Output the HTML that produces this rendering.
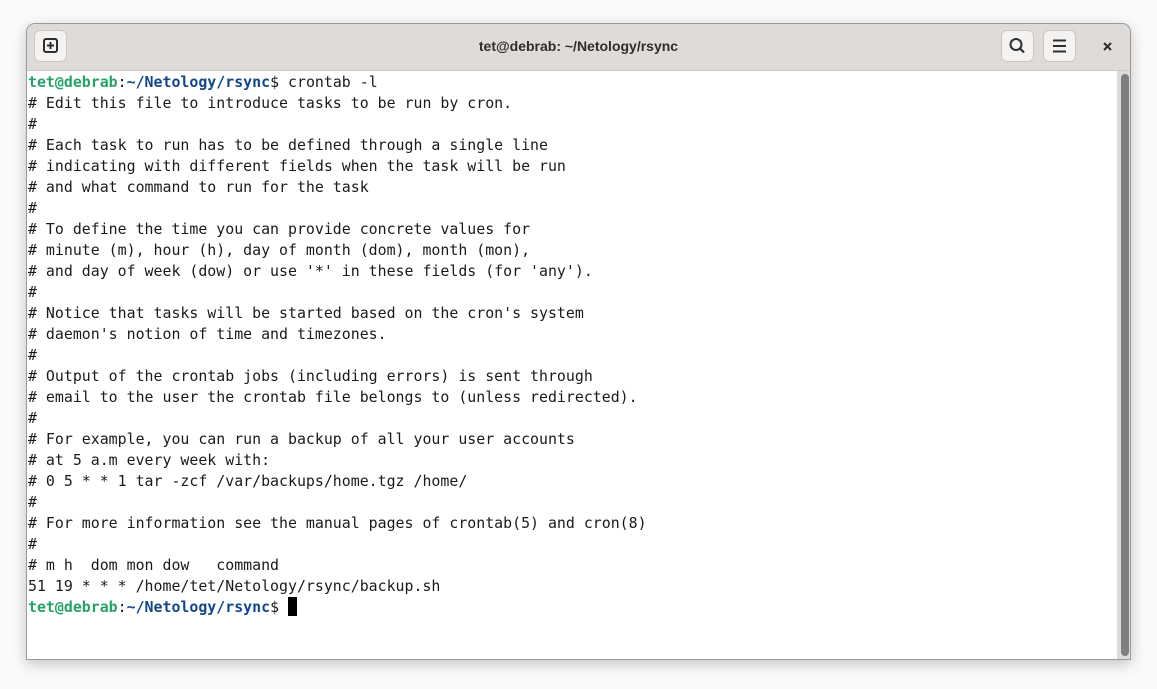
<!DOCTYPE html>
<html><head><style>
body{margin:0;width:1157px;height:689px;background:#fafafa;position:relative;overflow:hidden}
.win{position:absolute;left:26px;top:23px;width:1105px;height:637px;border:1px solid #9a9a9a;border-radius:9px 9px 0 0;box-shadow:0 4px 14px rgba(0,0,0,.22);background:#fff;overflow:hidden;box-sizing:border-box}
.hb{position:absolute;left:0;top:0;right:0;height:46px;background:#dedbd8;border-bottom:1px solid #cfccc8}
.btn{position:absolute;top:6px;width:33px;height:32px;background:#f4f3f2;border:1px solid #cbc8c4;border-radius:6px;box-sizing:border-box}
.title{position:absolute;left:0;right:0;top:14px;text-align:center;font:bold 14px "Liberation Sans",sans-serif;color:#2e2e2e}
pre{position:absolute;left:1px;top:48px;margin:0;font:14.9px/21px "DejaVu Sans Mono",monospace;color:#1a1a1a}
.g{color:#26a269;font-weight:bold}.b{color:#12488b;font-weight:bold}
.track{position:absolute;left:1090px;top:47px;width:15px;bottom:0;background:#dcdcdc}
.thumb{position:absolute;left:4px;top:3px;width:8px;bottom:3px;background:#7d8080;border-radius:4px}
.cur{display:inline-block;width:9px;height:19px;background:#000;vertical-align:-4px}
</style></head><body>
<div class="win">
<div class="hb">
<div class="btn" style="left:7px"><svg width="31" height="30" viewBox="0 0 31 30"><rect x="9" y="8" width="13" height="13" rx="2" fill="none" stroke="#2e2e2e" stroke-width="2"/><path d="M15.5 11v7M12 14.5h7" stroke="#2e2e2e" stroke-width="2"/></svg></div>
<div class="title">tet@debrab: ~/Netology/rsync</div>
<div class="btn" style="left:974px"><svg width="31" height="30" viewBox="0 0 31 30"><circle cx="14" cy="13.5" r="5.5" fill="none" stroke="#2e2e2e" stroke-width="2"/><path d="M18 17.5l4 4" stroke="#2e2e2e" stroke-width="2.2"/></svg></div>
<div class="btn" style="left:1016px"><svg width="31" height="30" viewBox="0 0 31 30"><path d="M9 9.5h13M9 15h13M9 20.5h13" stroke="#2e2e2e" stroke-width="2"/></svg></div>
<svg style="position:absolute;left:1075px;top:17px" width="12" height="12" viewBox="0 0 12 12"><path d="M2 2l7 7M9 2l-7 7" stroke="#2e2e2e" stroke-width="2"/></svg>
</div>
<pre><span class="g">tet@debrab</span>:<span class="b">~/Netology/rsync</span>$ crontab -l
# Edit this file to introduce tasks to be run by cron.
#
# Each task to run has to be defined through a single line
# indicating with different fields when the task will be run
# and what command to run for the task
#
# To define the time you can provide concrete values for
# minute (m), hour (h), day of month (dom), month (mon),
# and day of week (dow) or use '*' in these fields (for 'any').
#
# Notice that tasks will be started based on the cron's system
# daemon's notion of time and timezones.
#
# Output of the crontab jobs (including errors) is sent through
# email to the user the crontab file belongs to (unless redirected).
#
# For example, you can run a backup of all your user accounts
# at 5 a.m every week with:
# 0 5 * * 1 tar -zcf /var/backups/home.tgz /home/
#
# For more information see the manual pages of crontab(5) and cron(8)
#
# m h  dom mon dow   command
51 19 * * * /home/tet/Netology/rsync/backup.sh
<span class="g">tet@debrab</span>:<span class="b">~/Netology/rsync</span>$ <span class="cur"></span></pre>
<div class="track"><div class="thumb"></div></div>
</div>
</body></html>
